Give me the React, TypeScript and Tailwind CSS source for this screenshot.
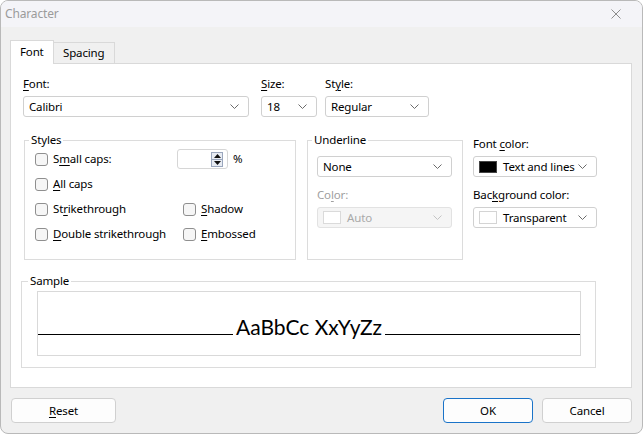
import React from "react";

const K = ({ c }: { c: string }) => <span className="underline underline-offset-[2px]">{c}</span>;

const Chevron = ({ light }: { light?: boolean }) => (
    <svg width="9" height="5" viewBox="0 0 9 5" className="shrink-0">
        <path d="M0.5 0.5 L4.5 4.5 L8.5 0.5" fill="none" stroke={light ? "#c4c4c4" : "#6b6b6b"} strokeWidth="1" />
    </svg>
);

type ComboProps = {
    className: string;
    children: React.ReactNode;
    disabled?: boolean;
};

const Combo = ({ className, children, disabled }: ComboProps) => (
    <div
        className={
            "flex h-[21px] items-center justify-between rounded-[3px] border pl-[5px] pr-[9px] " +
            (disabled ? "border-[#e2e2e2] bg-[#f5f5f5] text-[#a9a9a9] " : "border-[#d0d0d0] bg-white text-black ") +
            className
        }
    >
        <div className="flex items-center gap-[6px] whitespace-nowrap">{children}</div>
        <Chevron light={disabled} />
    </div>
);

const Check = ({ children }: { children: React.ReactNode }) => (
    <div className="flex h-[20px] items-center gap-[5px] whitespace-nowrap">
        <span className="h-[13px] w-[13px] shrink-0 rounded-[3px] border border-[#8f8f8f] bg-[#f6f6f6]" />
        <span>{children}</span>
    </div>
);

const Label = ({ children, grey }: { children: React.ReactNode; grey?: boolean }) => (
    <div className={"h-[16px] leading-[16px] whitespace-nowrap " + (grey ? "text-[#a0a0a0]" : "")}>{children}</div>
);

const Button = ({ children, primary, className }: { children: React.ReactNode; primary?: boolean; className: string }) => (
    <div
        className={
            "flex h-[25px] items-center justify-center rounded-[4px] border bg-[#fdfdfd] " +
            (primary ? "border-[#1a73c8] " : "border-[#d0d0d0] ") +
            className
        }
    >
        {children}
    </div>
);

export default function App() {
    return (
        <div className="flex h-[434px] w-[643px] flex-col overflow-hidden rounded-[8px] border border-[#b9b9b9] bg-[#f0f0f0] font-['Noto_Sans',sans-serif] text-[11.5px] tracking-[-0.15px] text-black">
            {/* title bar */}
            <div className="flex h-[26px] shrink-0 items-center justify-between bg-[#f4f4f8] pl-[4px] pr-[21px]">
                <span className="text-[12px] text-[#9b9b9b]">Character</span>
                <svg width="10" height="10" viewBox="0 0 10 10">
                    <path d="M0.5 0.5 L9.5 9.5 M9.5 0.5 L0.5 9.5" stroke="#8c8c8c" strokeWidth="1" />
                </svg>
            </div>

            <div className="flex flex-col pl-[9px] pr-[10px] pt-[13px]">
                {/* tabs */}
                <div className="relative z-10 flex items-end">
                    <div className="-mb-px h-[24px] w-[44px] border border-b-0 border-[#d9d9d9] bg-white pl-[9px] leading-[22px]">
                        Font
                    </div>
                    <div className="h-[21px] w-[61px] border border-b-0 border-l-0 border-[#d9d9d9] bg-[#f0f0f0] pl-[9px] leading-[20px]">
                        Spacing
                    </div>
                </div>

                {/* panel */}
                <div className="h-[325px] border border-[#d9d9d9] bg-white pl-[12px] pt-[12px]">
                    <div className="flex">
                        <div className="flex flex-col gap-[4px]">
                            <Label>
                                <K c="F" />
                                ont:
                            </Label>
                            <Combo className="w-[226px]">Calibri</Combo>
                        </div>
                        <div className="ml-[12px] flex flex-col gap-[4px]">
                            <Label>
                                <K c="S" />
                                ize:
                            </Label>
                            <Combo className="w-[56px]">18</Combo>
                        </div>
                        <div className="ml-[8px] flex flex-col gap-[4px]">
                            <Label>
                                St
                                <K c="y" />
                                le:
                            </Label>
                            <Combo className="w-[104px]">Regular</Combo>
                        </div>
                    </div>

                    <div className="mt-[15px] flex">
                        <fieldset className="ml-[1px] h-[128px] w-[272px] border border-[#dcdcdc]">
                            <legend className="ml-[4px] px-[2px] leading-[16px]">Styles</legend>
                            <div className="mt-[1px] flex flex-col gap-[5px] pl-[10px]">
                                <div className="flex items-center">
                                    <div className="w-[142px]">
                                        <Check>
                                            S<K c="m" />
                                            all caps:
                                        </Check>
                                    </div>
                                    <div className="flex h-[20px] w-[51px] items-center justify-end rounded-[3px] border border-[#d6d6d6] bg-white pr-[4px]">
                                        <div className="flex h-[15px] w-[12px] flex-col border border-[#9aa6bd] bg-[#e8ecf3]">
                                            <div className="flex flex-1 items-center justify-center border-b border-[#9aa6bd]">
                                                <svg width="7" height="4" viewBox="0 0 7 4">
                                                    <path d="M3.5 0 L7 4 L0 4 Z" fill="#111" />
                                                </svg>
                                            </div>
                                            <div className="flex flex-1 items-center justify-center">
                                                <svg width="7" height="4" viewBox="0 0 7 4">
                                                    <path d="M0 0 L7 0 L3.5 4 Z" fill="#111" />
                                                </svg>
                                            </div>
                                        </div>
                                    </div>
                                    <span className="ml-[5px]">%</span>
                                </div>
                                <Check>
                                    <K c="A" />
                                    ll caps
                                </Check>
                                <div className="grid grid-cols-[148px_1fr]">
                                    <Check>
                                        St<K c="r" />
                                        ikethrough
                                    </Check>
                                    <Check>
                                        <K c="S" />
                                        hadow
                                    </Check>
                                </div>
                                <div className="grid grid-cols-[148px_1fr]">
                                    <Check>
                                        <K c="D" />
                                        ouble strikethrough
                                    </Check>
                                    <Check>
                                        <K c="E" />
                                        mbossed
                                    </Check>
                                </div>
                            </div>
                        </fieldset>

                        <fieldset className="ml-[11px] h-[128px] w-[156px] border border-[#dcdcdc]">
                            <legend className="ml-[4px] px-[2px] leading-[16px]">Underline</legend>
                            <div className="flex flex-col pl-[9px]">
                                <Combo className="mt-[8px] w-[135px]">None</Combo>
                                <div className="mt-[10px]">
                                    <Label grey>
                                        Co
                                        <K c="l" />
                                        or:
                                    </Label>
                                </div>
                                <Combo disabled className="mt-[4px] w-[135px]">
                                    <span className="h-[13px] w-[18px] border border-[#dadada] bg-white" />
                                    Auto
                                </Combo>
                            </div>
                        </fieldset>

                        <div className="ml-[10px] mt-[4px] flex flex-col">
                            <Label>
                                Font <K c="c" />
                                olor:
                            </Label>
                            <Combo className="mt-[4px] w-[124px]">
                                <span className="h-[12px] w-[18px] border border-[#444] bg-black" />
                                Text and lines
                            </Combo>
                            <div className="mt-[10px]">
                                <Label>
                                    Bac
                                    <K c="k" />
                                    ground color:
                                </Label>
                            </div>
                            <Combo className="mt-[4px] w-[124px]">
                                <span className="h-[13px] w-[18px] border border-[#d4d4d4] bg-white" />
                                Transparent
                            </Combo>
                        </div>
                    </div>

                    <fieldset className="-ml-[2px] mt-[13px] h-[95px] w-[575px] border border-[#dcdcdc]">
                        <legend className="ml-[6px] px-[2px] leading-[16px]">Sample</legend>
                        <div className="ml-[15px] mt-[2px] h-[65px] w-[544px] border border-[#d9d9d9] bg-white pt-[22px]">
                            <div className="flex items-baseline">
                                <div className="h-px flex-1 bg-black" />
                                <span className="px-[3px] font-['Lato',sans-serif] text-[21px] leading-[26px] tracking-normal">AaBbCc XxYyZz</span>
                                <div className="h-px flex-1 bg-black" />
                            </div>
                        </div>
                    </fieldset>
                </div>

                {/* buttons */}
                <div className="mt-[10px] flex">
                    <Button className="ml-[1px] w-[105px]">
                        <K c="R" />
                        eset
                    </Button>
                    <Button primary className="ml-auto w-[90px]">
                        OK
                    </Button>
                    <Button className="ml-[9px] w-[90px]">Cancel</Button>
                </div>
            </div>
        </div>
    );
}
